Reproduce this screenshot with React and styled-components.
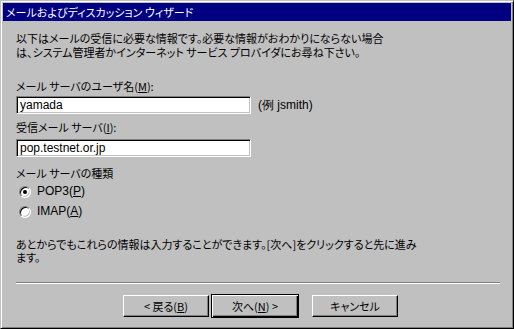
import React from "react";
import styled, { createGlobalStyle } from "styled-components";

const GlobalStyle = createGlobalStyle`
  html, body {
    margin: 0;
    padding: 0;
    background: #c0c0c0;
  }
  * {
    box-sizing: border-box;
  }
`;

const Window = styled.div`
  width: 514px;
  height: 329px;
  background: #c0c0c0;
  border: 1px solid;
  border-color: #c0c0c0 #000 #000 #c0c0c0;
  box-shadow: inset 1px 1px #fff, inset -1px -1px #808080;
  padding: 2px;
  display: flex;
  flex-direction: column;
  font-family: "Noto Sans CJK JP", "Liberation Sans", sans-serif;
  font-size: 11px;
  line-height: 13px;
  color: #000;
`;

const TitleBar = styled.div`
  height: 18px;
  background: #000080;
  color: #fff;
  font-size: 11px;
  padding-left: 3px;
  display: flex;
  align-items: center;
  font-feature-settings: "palt";
`;

const Body = styled.div`
  padding: 10px 13px 0 13px;
  display: flex;
  flex-direction: column;
  flex: 1;
  font-feature-settings: "palt";
`;

const Text = styled.p`
  margin: ${(p) => p.$top || 0}px 0 0 0;
  line-height: ${(p) => p.$lh || 13}px;
`;

const Label = styled.div`
  margin-top: ${(p) => p.$top || 0}px;
  height: 13px;
`;

const Row = styled.div`
  display: flex;
  align-items: center;
  gap: 7px;
  margin-top: ${(p) => p.$top || 0}px;
`;

const Input = styled.div`
  width: 235px;
  height: 18px;
  background: #fff;
  border: 1px solid;
  border-color: #808080 #fff #fff #808080;
  box-shadow: inset 1px 1px #000, inset -1px -1px #c0c0c0;
  padding: 0 3px;
  display: flex;
  align-items: center;
  font-family: "Liberation Sans", sans-serif;
  font-size: 12px;
`;

const Hint = styled.span`
  font-family: "Liberation Sans", sans-serif;
  font-size: 12px;
`;

const RadioRow = styled.label`
  display: flex;
  align-items: center;
  gap: 6px;
  height: 13px;
  margin-top: ${(p) => p.$top || 0}px;
  padding-left: 3px;
  font-family: "Liberation Sans", sans-serif;
  font-size: 12px;
`;

const RadioDot = styled.span`
  position: relative;
  width: 12px;
  height: 12px;
  border-radius: 50%;
  background: #fff;
  border: 1px solid;
  border-color: #808080 #fff #fff #808080;
  box-shadow: inset 1px 1px #000, inset -1px -1px #c0c0c0;

  &::after {
    content: "";
    display: ${(p) => (p.$checked ? "block" : "none")};
    position: absolute;
    left: 3px;
    top: 3px;
    width: 4px;
    height: 4px;
    border-radius: 50%;
    background: #000;
  }
`;

const Separator = styled.div`
  margin-top: 18px;
  height: 2px;
  border-top: 1px solid #808080;
  border-bottom: 1px solid #fff;
  width: 484px;
`;

const ButtonRow = styled.div`
  display: flex;
  margin-top: 11px;
  padding-left: 107px;
`;

const Button = styled.button`
  width: ${(p) => (p.$default ? 88 : 86)}px;
  height: ${(p) => (p.$default ? 24 : 22)}px;
  margin: ${(p) => (p.$default ? "-1px 13px 0 2px" : "0")};
  background: #c0c0c0;
  font-family: "Noto Sans CJK JP", "Liberation Sans", sans-serif;
  font-size: 11px;
  color: #000;
  padding: 0;
  border: 1px solid;
  border-color: ${(p) => (p.$default ? "#000" : "#fff #000 #000 #fff")};
  box-shadow: ${(p) =>
    p.$default
      ? "inset 1px 1px #fff, inset -1px -1px #000, inset -2px -2px #808080"
      : "inset -1px -1px #808080"};
  font-feature-settings: "palt";
`;

export default function App() {
  return (
    <>
      <GlobalStyle />
      <Window>
        <TitleBar>メールおよびディスカッション ウィザード</TitleBar>
        <Body>
          <Text $lh={14}>
            以下はメールの受信に必要な情報です。必要な情報がおわかりにならない場合
            <br />
            は、システム管理者かインターネット サービス プロバイダにお尋ね下さい。
          </Text>
          <Label $top={21}>
            メール サーバのユーザ名(<u>M</u>):
          </Label>
          <Row $top={3}>
            <Input>yamada</Input>
            <Hint>(例 jsmith)</Hint>
          </Row>
          <Label $top={7}>
            受信メール サーバ(<u>I</u>):
          </Label>
          <Row $top={5}>
            <Input>pop.testnet.or.jp</Input>
          </Row>
          <Label $top={10}>メール サーバの種類</Label>
          <RadioRow $top={5}>
            <RadioDot $checked />
            <span>
              POP3(<u>P</u>)
            </span>
          </RadioRow>
          <RadioRow $top={7}>
            <RadioDot />
            <span>
              IMAP(<u>A</u>)
            </span>
          </RadioRow>
          <Text $top={20} $lh={13}>
            あとからでもこれらの情報は入力することができます。[次へ]をクリックすると先に進み
            <br />
            ます。
          </Text>
          <Separator />
          <ButtonRow>
            <Button>
              &lt; 戻る(<u>B</u>)
            </Button>
            <Button $default>
              次へ(<u>N</u>) &gt;
            </Button>
            <Button>キャンセル</Button>
          </ButtonRow>
        </Body>
      </Window>
    </>
  );
}
